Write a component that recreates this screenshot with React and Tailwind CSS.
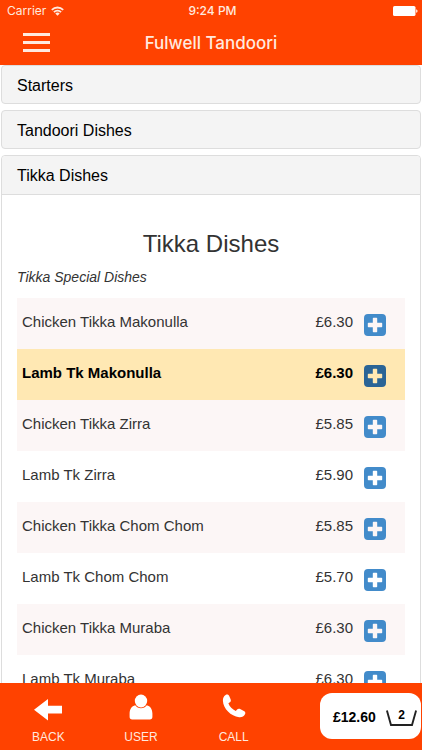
import { useState } from "react";

const categories = ["Starters", "Tandoori Dishes"];

const dishes = [
  { name: "Chicken Tikka Makonulla", price: "£6.30" },
  { name: "Lamb Tk Makonulla", price: "£6.30" },
  { name: "Chicken Tikka Zirra", price: "£5.85" },
  { name: "Lamb Tk Zirra", price: "£5.90" },
  { name: "Chicken Tikka Chom Chom", price: "£5.85" },
  { name: "Lamb Tk Chom Chom", price: "£5.70" },
  { name: "Chicken Tikka Muraba", price: "£6.30" },
  { name: "Lamb Tk Muraba", price: "£6.30" },
];

function WifiIcon() {
  return (
    <svg viewBox="0 0 13 10" className="h-[10px] w-[13px]" fill="none" stroke="currentColor" strokeWidth="1.8">
      <path d="M0.8 3.8a8.2 8.2 0 0 1 11.4 0" />
      <path d="M2.9 6.2a5.2 5.2 0 0 1 7.2 0" />
      <path d="M6.5 9.8 4.3 7.6a3 3 0 0 1 4.4 0z" fill="currentColor" stroke="none" />
    </svg>
  );
}

function BatteryIcon() {
  return (
    <svg viewBox="0 0 25 10" className="h-[10px] w-[25px]" fill="currentColor">
      <rect width="22.5" height="10" rx="1.6" />
      <path d="M23.2 3.2c1.8.5 1.8 3.1 0 3.6z" />
    </svg>
  );
}

function PlusIcon() {
  return (
    <svg viewBox="0 0 22 22" className="h-[22px] w-[22px]" fill="currentColor">
      <path
        fillRule="evenodd"
        d="M4 0h14a4 4 0 0 1 4 4v14a4 4 0 0 1-4 4H4a4 4 0 0 1-4-4V4a4 4 0 0 1 4-4zM9.500 3.800a.7.7 0 0 0-.7.7v4.300H4.500a.7.7 0 0 0-.7.7v3a.7.7 0 0 0 .7.7h4.300v4.300a.7.7 0 0 0 .7.7h3a.7.7 0 0 0 .7-.7v-4.300h4.300a.7.7 0 0 0 .7-.7v-3a.7.7 0 0 0-.7-.7h-4.300V4.500a.7.7 0 0 0-.7-.7z"
      />
    </svg>
  );
}

function BackIcon() {
  return (
    <svg viewBox="0 0 28 28" className="h-7 w-7" fill="currentColor">
      <path d="M0 16.800 14 6v6.800h14v7.600H14V27.600z" />
    </svg>
  );
}

function UserIcon() {
  return (
    <svg viewBox="0 0 24 28" className="h-7 w-6" fill="currentColor">
      <ellipse cx="12" cy="8" rx="6.200" ry="6.400" />
      <path d="M6.200 12.200C2.800 13 .6 16 .6 20.500v3.200c0 1.900.9 2.700 2.600 2.700h17.600c1.700 0 2.600-.8 2.600-2.700v-3.200c0-4.500-2.200-7.500-5.600-8.300-1.400 2-3.300 3-5.800 3s-4.400-1-5.800-3z" />
    </svg>
  );
}

function PhoneIcon() {
  return (
    <svg viewBox="0 0 24 28" className="h-7 w-6" fill="currentColor">
      <path d="M3.600 1.900C4.900 1.200 6.400 1.500 7.100 2.800l1.500 3.400c.5 1.200.3 2.300-.7 3L6.400 10.300c1.200 3.400 3.900 6.200 7.400 7.700l1.300-1.500c.8-.9 2-1.100 3-.5l4.200 2.300c1 .5 1.300 1.600.8 2.700-1.200 2.400-3.300 3.500-6 3.200C8.900 23.300 1.200 15.800.9 7.800.8 5.300 1.600 3 3.600 1.900z" />
    </svg>
  );
}

function BasketIcon() {
  return (
    <svg viewBox="0 0 31 17" className="block h-[17px] w-[31px]" fill="none" stroke="#222" strokeWidth="1.9">
      <path d="M.9 1.400 5 16h21L30.100 1.400" />
    </svg>
  );
}

const tabs = [
  { label: "BACK", Icon: BackIcon },
  { label: "USER", Icon: UserIcon },
  { label: "CALL", Icon: PhoneIcon },
];

export default function App() {
  const [selected, setSelected] = useState("Lamb Tk Makonulla");

  return (
    <div className="flex h-screen flex-col bg-white font-['Liberation_Sans',Arial,sans-serif] text-[#333]">
      <header className="shrink-0 bg-[#ff4200] text-[#ffe9df] font-[Inter,sans-serif]">
        <div className="grid h-[22px] grid-cols-3 items-center pr-1 pl-[7px] text-xs">
          <div className="flex items-center gap-[5px]">
            <span>Carrier</span>
            <WifiIcon />
          </div>
          <span className="text-center font-medium">9:24 PM</span>
          <div className="flex justify-end text-white">
            <BatteryIcon />
          </div>
        </div>
        <div className="grid h-[43px] grid-cols-[80px_1fr_80px] items-center">
          <button type="button" aria-label="Menu" className="ml-[23px] flex w-[27px] flex-col gap-[5px] pb-[2px]">
            <span className="h-[3px] w-full bg-current" />
            <span className="h-[3px] w-full bg-current" />
            <span className="h-[3px] w-full bg-current" />
          </button>
          <h1 className="text-center text-[17px] font-medium">Fulwell Tandoori</h1>
        </div>
      </header>

      <main className="flex min-h-0 flex-1 flex-col gap-[6px] overflow-y-auto px-px [scrollbar-width:none]">
        {categories.map((category) => (
          <button
            key={category}
            type="button"
            className="h-[39px] w-full shrink-0 rounded border border-[#ddd] bg-[#f4f4f4] px-[15px] pt-[2px] text-left text-base text-black"
          >
            {category}
          </button>
        ))}

        <section className="shrink-0 rounded border border-[#ddd]">
          <button
            type="button"
            aria-expanded="true"
            className="h-[39px] w-full rounded-t border-b border-[#ddd] bg-[#f4f4f4] px-[15px] pt-[2px] text-left text-base text-black"
          >
            Tikka Dishes
          </button>
          <div className="px-[15px] pt-[34px]">
            <h2 className="text-center text-2xl leading-[30px]">Tikka Dishes</h2>
            <p className="mt-2 text-sm leading-5 italic">Tikka Special Dishes</p>
            <table className="mt-[11px] w-full text-[15px]">
              <tbody>
                {dishes.map((dish) => (
                  <tr
                    key={dish.name}
                    className={
                      dish.name === selected
                        ? "h-[51px] bg-[#ffe8b3] font-bold text-black"
                        : "h-[51px] odd:bg-[#fcf6f6]"
                    }
                  >
                    <td className="pb-[3px] pl-[5px]">{dish.name}</td>
                    <td className="pb-[3px] text-right">{dish.price}</td>
                    <td className="w-[52px] pt-[3px] pl-[11px]">
                      <button
                        type="button"
                        aria-label={`Add ${dish.name}`}
                        onClick={() => setSelected(dish.name)}
                        className={dish.name === selected ? "block text-[#2a6496]" : "block text-[#428bca]"}
                      >
                        <PlusIcon />
                      </button>
                    </td>
                  </tr>
                ))}
              </tbody>
            </table>
          </div>
        </section>
      </main>

      <footer className="flex h-[67px] shrink-0 items-start bg-[#ff4200] pr-px text-white">
        <nav className="grid flex-1 grid-cols-3 pr-10 pl-[2px]">
          {tabs.map(({ label, Icon }) => (
            <button key={label} type="button" className="flex flex-col items-center gap-[8px] pt-[10px] text-xs">
              <Icon />
              <span className="text-[#ffe9df]">{label}</span>
            </button>
          ))}
        </nav>
        <button
          type="button"
          className="mt-[10px] flex h-[46px] w-[101px] items-center justify-between rounded-xl bg-white pt-[2px] pr-1 pl-[13px] text-sm font-bold text-black"
        >
          <span>£12.60</span>
          <span className="relative">
            <BasketIcon />
            <span className="absolute inset-x-0 top-0 text-center text-xs leading-3">2</span>
          </span>
        </button>
      </footer>
    </div>
  );
}
